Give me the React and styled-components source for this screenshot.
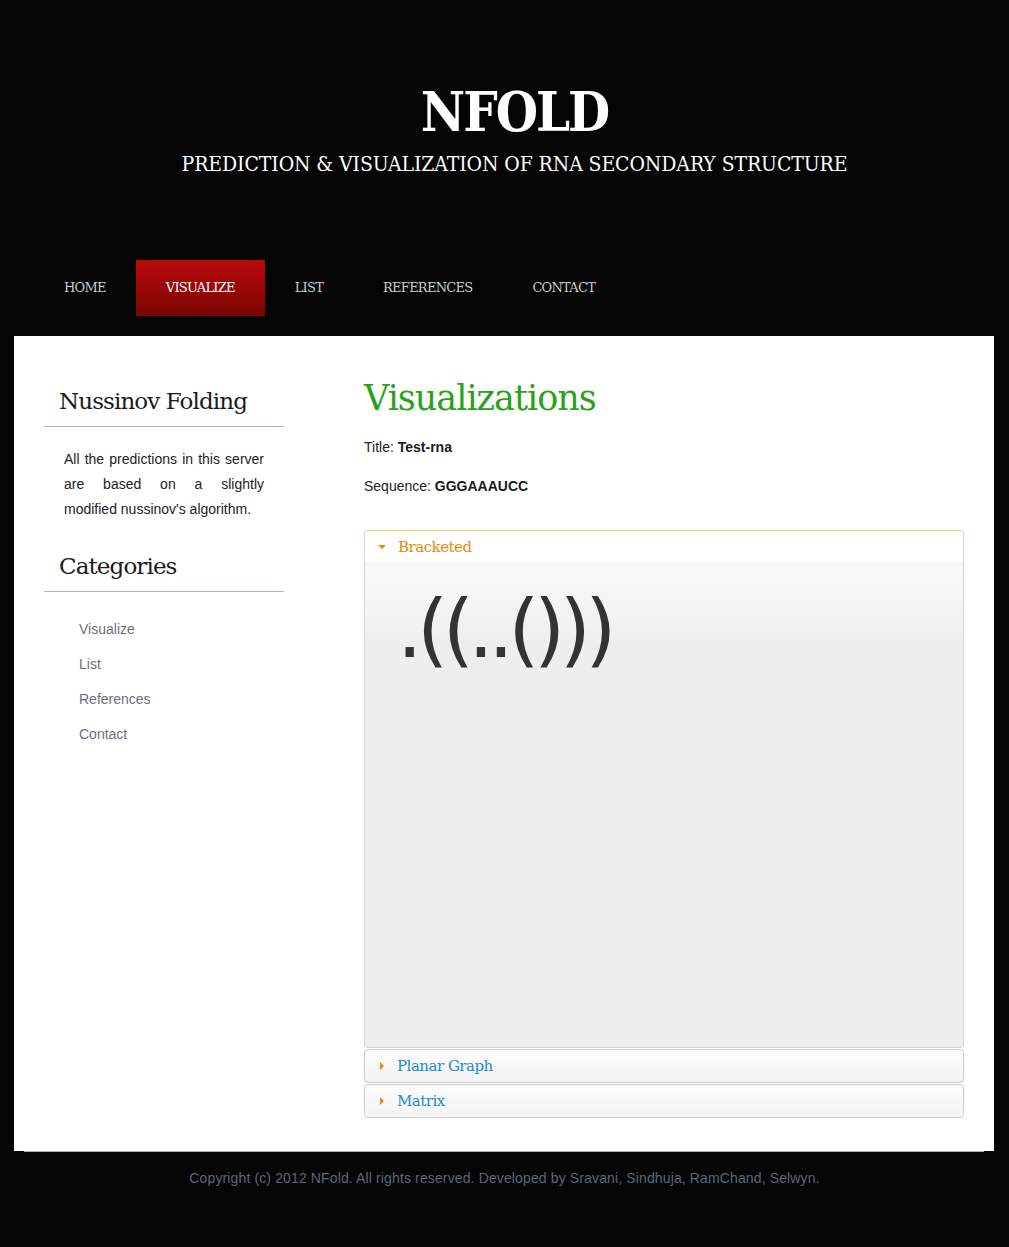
import React, { useState } from 'react';
import styled, { createGlobalStyle } from 'styled-components';

const GlobalStyle = createGlobalStyle`
  html, body {
    margin: 0;
    padding: 0;
    background: #050505;
  }
  body {
    font-family: "Liberation Sans", Arial, sans-serif;
    font-size: 14px;
    color: #222;
  }
`;

const slab = '"DejaVu Serif", "Liberation Serif", serif';

const Header = styled.header`
  text-align: center;
  padding: 82px 0 0 20px;
  height: 178px;
  color: #fff;
  font-family: ${slab};
`;

const Logo = styled.h1`
  margin: 0;
  font-size: 54px;
  line-height: 60px;
  font-weight: bold;
  letter-spacing: -2px;
  font-stretch: condensed;
`;

const Tagline = styled.p`
  margin: 8px 0 0;
  font-size: 21px;
  line-height: 28px;
  font-stretch: condensed;
  letter-spacing: -0.1px;
`;

const Nav = styled.nav`
  display: flex;
  padding-left: 34px;
  height: 56px;
  margin-bottom: 20px;
`;

const NavItem = styled.a`
  display: flex;
  align-items: center;
  padding: 0 30px 1px;
  font-family: ${slab};
  font-size: 13px;
  letter-spacing: -0.75px;
  text-transform: uppercase;
  color: ${p => (p.$active ? '#fff' : '#c8ccd0')};
  background: ${p => (p.$active ? 'linear-gradient(#b80b0b, #7c0404)' : 'transparent')};
  cursor: pointer;
`;

const Panel = styled.main`
  background: #fff;
  margin: 0 15px 0 14px;
  padding: 42px 30px 33px;
  display: grid;
  grid-template-columns: 240px 1fr;
  column-gap: 80px;
`;

const BottomRule = styled.div`
  height: 1px;
  background: #a9b0ba;
  margin: 0 25px 0 24px;
`;

const Sidebar = styled.aside``;

const SideHeading = styled.h3`
  margin: 0;
  padding: 8px 16px 10px 15px;
  font-family: ${slab};
  font-weight: normal;
  font-size: 23px;
  line-height: 30px;
  letter-spacing: -0.9px;
  color: #1a1a1a;
  border-bottom: 1px solid #a9b8cc;
`;

const SideText = styled.p`
  margin: 20px 20px 21px;
  font-size: 14px;
  line-height: 25px;
  color: #222;
`;

const SideLine = styled.span`
  display: block;
  text-align: justify;
  text-align-last: ${p => (p.$last ? 'left' : 'justify')};
`;

const CatList = styled.ul`
  list-style: none;
  margin: 20px 0 0;
  padding: 0 0 0 35px;
`;

const CatItem = styled.li`
  font-size: 14px;
  line-height: 35px;
  color: #6b7080;
`;

const Content = styled.section``;

const PageTitle = styled.h2`
  margin: -2px 0 0;
  font-family: ${slab};
  font-weight: normal;
  font-size: 35px;
  line-height: 44px;
  letter-spacing: -1px;
  color: #2aa11a;
`;

const Meta = styled.p`
  margin: ${p => p.$top}px 0 0;
  font-size: 14px;
  line-height: 20px;
  color: #222;
  b { color: #1a1a1a; }
`;

const Accordion = styled.div`
  margin-top: 34px;
  display: flex;
  flex-direction: column;
  gap: 1px;
`;

const Section = styled.div`
  border: 1px solid ${p => (p.$open ? '#f3d25a' : '#cccccc')};
  border-radius: 4px;
  overflow: hidden;
  background: ${p => (p.$open ? '#fff' : 'linear-gradient(#fdfdfd, #f3f3f3)')};
  ${p => p.$open && 'border-bottom-color: #d4d4d4; border-left-color: #d8d8d8; border-right-color: #d8d8d8;'}
`;

const SectionHead = styled.button`
  all: unset;
  display: flex;
  align-items: center;
  gap: 12px;
  height: 32px;
  padding: 0 0 1px 12px;
  box-sizing: border-box;
  width: 100%;
  cursor: pointer;
  font-family: ${slab};
  font-size: 15px;
  letter-spacing: -0.5px;
  color: ${p => (p.$open ? '#e8890c' : '#1a8ec8')};
`;

const Caret = styled.span`
  display: inline-block;
  flex: none;
  width: 0;
  height: 0;
  ${p =>
    p.$open
      ? 'border-left: 4px solid transparent; border-right: 4px solid transparent; border-top: 4px solid #e8890c; margin-left: 1px;'
      : 'border-top: 4px solid transparent; border-bottom: 4px solid transparent; border-left: 4px solid #e8890c; margin-left: 3px; margin-right: 1px;'}
`;

const SectionBody = styled.div`
  height: 484px;
  background: linear-gradient(#f9f9f9 0px, #f6f6f6 30px, #eeeeee 80px, #eeeeee 100%);
  padding: 16px 0 0 32px;
  box-sizing: border-box;
  border-top: 1px solid #f3f3f3;
`;

const Brackets = styled.div`
  font-family: "DejaVu Sans", "Liberation Sans", sans-serif;
  font-size: 80px;
  line-height: 100px;
  letter-spacing: -5.5px;
  color: #333;
`;

const Footer = styled.footer`
  text-align: center;
  padding: 18px 0 60px;
  font-size: 14px;
  letter-spacing: 0.13px;
  color: #5c6578;
`;

const navItems = ['Home', 'Visualize', 'List', 'References', 'Contact'];
const categories = ['Visualize', 'List', 'References', 'Contact'];
const intro = ['All the predictions in this server', 'are based on a slightly', "modified nussinov's algorithm."];

export default function App() {
  const [open, setOpen] = useState('Bracketed');
  const sections = ['Bracketed', 'Planar Graph', 'Matrix'];

  return (
    <>
      <GlobalStyle />
      <Header>
        <Logo>NFOLD</Logo>
        <Tagline>PREDICTION &amp; VISUALIZATION OF RNA SECONDARY STRUCTURE</Tagline>
      </Header>
      <Nav>
        {navItems.map(n => (
          <NavItem key={n} $active={n === 'Visualize'}>{n}</NavItem>
        ))}
      </Nav>
      <Panel>
        <Sidebar>
          <SideHeading>Nussinov Folding</SideHeading>
          <SideText>
            {intro.map((l, i) => (
              <SideLine key={i} $last={i === intro.length - 1}>{l}</SideLine>
            ))}
          </SideText>
          <SideHeading>Categories</SideHeading>
          <CatList>
            {categories.map(c => (
              <CatItem key={c}>{c}</CatItem>
            ))}
          </CatList>
        </Sidebar>
        <Content>
          <PageTitle>Visualizations</PageTitle>
          <Meta $top={17}>Title: <b>Test-rna</b></Meta>
          <Meta $top={19}>Sequence: <b>GGGAAAUCC</b></Meta>
          <Accordion>
            {sections.map(s => (
              <Section key={s} $open={open === s}>
                <SectionHead $open={open === s} onClick={() => setOpen(s)}>
                  <Caret $open={open === s} />
                  {s}
                </SectionHead>
                {open === s && (
                  <SectionBody>
                    {s === 'Bracketed' && <Brackets>.((..()))</Brackets>}
                  </SectionBody>
                )}
              </Section>
            ))}
          </Accordion>
        </Content>
      </Panel>
      <BottomRule />
      <Footer>
        Copyright (c) 2012 NFold. All rights reserved. Developed by Sravani, Sindhuja, RamChand, Selwyn.
      </Footer>
    </>
  );
}
